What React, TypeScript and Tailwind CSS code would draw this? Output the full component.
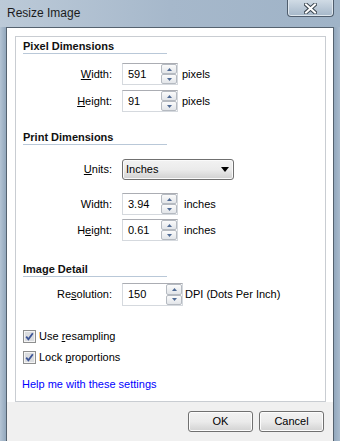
import React from 'react';

function Spinner() {
  return (
    <div className="flex w-[16px] flex-col">
      <div className="flex flex-1 items-center justify-center rounded-[2px] border border-[#b5bac1] bg-linear-to-b from-[#fbfbfb] to-[#e2e5e9]">
        <svg width="5" height="3" viewBox="0 0 5 3">
          <path d="M0 3 L2.5 0 L5 3 Z" fill="#4f6a94" />
        </svg>
      </div>
      <div className="flex flex-1 items-center justify-center rounded-[2px] border border-[#b5bac1] bg-linear-to-b from-[#fbfbfb] to-[#e2e5e9]">
        <svg width="5" height="3" viewBox="0 0 5 3">
          <path d="M0 0 L5 0 L2.5 3 Z" fill="#4f6a94" />
        </svg>
      </div>
    </div>
  );
}

function NumberBox({ value, wide }: { value: string; wide?: boolean }) {
  return (
    <div
      className={`flex ${wide ? 'h-[23px] w-[61px]' : 'h-[22px] w-[56px]'} border border-[#d5d9de] border-t-[#abadb3] bg-white`}
    >
      <span className="flex flex-1 items-center pl-[5px]">{value}</span>
      <Spinner />
    </div>
  );
}

function Heading({ children }: { children: React.ReactNode }) {
  return (
    <div className="ml-[7px] w-[144px] border-b border-[#b9c8d8] font-bold leading-[13px] text-[#111]">
      {children}
    </div>
  );
}

function Row({
  label,
  children,
  unit,
  gap,
}: {
  label: React.ReactNode;
  children: React.ReactNode;
  unit?: string;
  gap: string;
}) {
  return (
    <div className="flex items-center">
      <div className="w-[96px] text-right">{label}</div>
      <div className="ml-[10px]">{children}</div>
      {unit && <span className={gap}>{unit}</span>}
    </div>
  );
}

function Check({ children }: { children: React.ReactNode }) {
  return (
    <div className="ml-[7px] flex h-[16px] items-center">
      <svg width="13" height="13" viewBox="0 0 13 13">
        <rect x="0.5" y="0.5" width="12" height="12" fill="#f4f4f4" stroke="#8e8f8f" />
        <rect x="2" y="2" width="9" height="9" fill="#dadcdf" />
        <path d="M3.2 6.6 L5.4 9.3 L9.8 3.2" fill="none" stroke="#3d5597" strokeWidth="1.8" />
      </svg>
      <span className="ml-[3px]">{children}</span>
    </div>
  );
}

function Button({ children }: { children: React.ReactNode }) {
  return (
    <div className="flex h-[21px] w-[65px] items-center justify-center rounded-[3px] border border-[#707070] bg-linear-to-b from-[#f2f2f2] via-[#ebebeb] to-[#d2d2d2] shadow-[inset_0_0_0_1px_#fcfcfc]">
      {children}
    </div>
  );
}

export default function App() {
  return (
    <div className="flex h-[441px] w-[340px] flex-col overflow-hidden bg-[#a3b6c9] font-['Liberation_Sans',Arial,sans-serif] text-[11px] text-black">
      {/* Title bar */}
      <div className="flex h-[27px] shrink-0 items-start justify-between bg-linear-to-r from-[#bccad8] via-[#a6b8cb] to-[#9fb3c7]">
        <span className="ml-[7px] mt-[6px] text-[12px] leading-[14px] text-[#1b1b1b]">Resize Image</span>
        <div className="mr-[6px] flex h-[17px] w-[47px] items-center justify-center rounded-b-[4px] border border-t-0 border-[#4f5d6d] bg-linear-to-b from-[#d0dbe5] to-[#a5b7c9] shadow-[inset_0_-1px_0_#dfe7ee,inset_1px_0_0_#dfe7ee,inset_-1px_0_0_#dfe7ee]">
          <svg width="13" height="11" viewBox="0 0 13 11">
            <path d="M2 1.5 L11 9.5 M11 1.5 L2 9.5" stroke="#3b4650" strokeWidth="4" strokeLinecap="square" />
            <path d="M2 1.5 L11 9.5 M11 1.5 L2 9.5" stroke="#ffffff" strokeWidth="2" strokeLinecap="square" />
          </svg>
        </div>
      </div>

      {/* Body */}
      <div className="flex flex-1">
        <div className="w-[6px] bg-linear-to-r from-[#b4c4d4] to-[#93a8bd]" />
        <div className="flex flex-1 flex-col border-x border-t border-[#55626f] bg-white">
          <div className="pl-[8px] pr-[7px] pt-[8px]">
            <div className="flex h-[366px] flex-col border border-[#c9cdd2]">
              <div className="mt-[3px]">
                <Heading>Pixel Dimensions</Heading>
              </div>
              <div className="mt-[9px]">
                <Row label={<><u>W</u>idth:</>} unit="pixels" gap="ml-[4px]">
                  <NumberBox value="591" />
                </Row>
              </div>
              <div className="mt-[5px]">
                <Row label={<><u>H</u>eight:</>} unit="pixels" gap="ml-[4px]">
                  <NumberBox value="91" />
                </Row>
              </div>

              <div className="mt-[19px]">
                <Heading>Print Dimensions</Heading>
              </div>
              <div className="mt-[14px]">
                <Row label={<><u>U</u>nits:</>} gap="">
                  <div className="flex h-[21px] w-[112px] items-center justify-between rounded-[3px] border border-[#707070] bg-linear-to-b from-[#f2f2f2] via-[#ebebeb] to-[#d0d0d0] pl-[3px] pr-[4px] shadow-[inset_0_0_0_1px_#fafafa]">
                    <span>Inches</span>
                    <svg width="8" height="5" viewBox="0 0 8 5">
                      <path d="M0 0 L8 0 L4 5 Z" fill="#000" />
                    </svg>
                  </div>
                </Row>
              </div>
              <div className="mt-[13px]">
                <Row label="Width:" unit="inches" gap="ml-[6px]">
                  <NumberBox value="3.94" />
                </Row>
              </div>
              <div className="mt-[4px]">
                <Row label={<>H<u>e</u>ight:</>} unit="inches" gap="ml-[6px]">
                  <NumberBox value="0.61" />
                </Row>
              </div>

              <div className="mt-[22px]">
                <Heading>Image Detail</Heading>
              </div>
              <div className="mt-[6px]">
                <Row label={<>Re<u>s</u>olution:</>} unit="DPI (Dots Per Inch)" gap="ml-[2px]">
                  <NumberBox value="150" wide />
                </Row>
              </div>

              <div className="mt-[22px]">
                <Check>
                  Use <u>r</u>esampling
                </Check>
              </div>
              <div className="mt-[5px]">
                <Check>
                  Lock <u>p</u>roportions
                </Check>
              </div>
              <div className="ml-[6px] mt-[12px] leading-[14px] text-[#0000ff]">Help me with these settings</div>
            </div>
          </div>
          <div className="flex flex-1 justify-end gap-[6px] bg-[#f0f0f0] pr-[9px] pt-[9px]">
            <Button>OK</Button>
            <Button>Cancel</Button>
          </div>
        </div>
        <div className="w-[6px] bg-linear-to-r from-[#93a8bd] to-[#a9bbcd]" />
      </div>
    </div>
  );
}
